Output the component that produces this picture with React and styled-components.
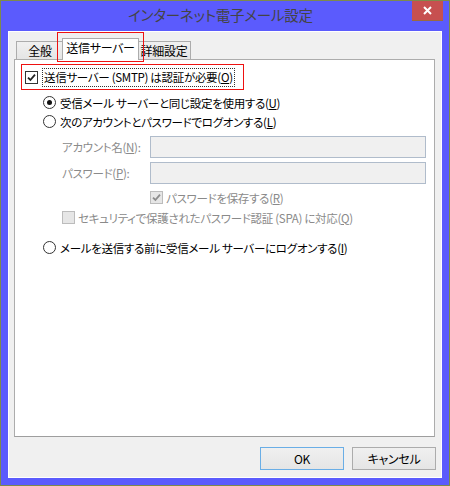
import React from "react";
import styled, { createGlobalStyle, css } from "styled-components";

const GlobalStyle = createGlobalStyle`
  html, body {
    margin: 0;
    padding: 0;
    background: #ffffff;
  }
  body {
    font-family: "Noto Sans CJK JP", "Noto Sans", sans-serif;
    font-size: 11.5px;
    letter-spacing: -0.3px;
    font-feature-settings: "palt";
    color: #000;
  }
`;

const Frame = styled.div`
  width: 450px;
  height: 486px;
  box-sizing: border-box;
  border: 1px solid #7d8a4c;
  background: #5b5bfd;
  display: flex;
  flex-direction: column;
  padding: 0 7px 7px 7px;
`;

const TitleBar = styled.div`
  position: relative;
  height: 30px;
  display: flex;
  align-items: center;
  justify-content: center;
  padding-right: 9px;
  padding-bottom: 4px;
  box-sizing: border-box;
  font-size: 14.5px;
  letter-spacing: -0.2px;
  color: #444;
`;

const CloseButton = styled.div`
  position: absolute;
  top: 0;
  right: -1px;
  width: 31px;
  height: 19px;
  background: #c75050;
  border-bottom: 1px solid #9a6a40;
  display: flex;
  align-items: center;
  justify-content: center;
`;

const Client = styled.div`
  flex: 1;
  background: #f0f0f0;
  border: 1px solid #ffffff;
  padding: 6px 6px 0 5px;
  display: flex;
  flex-direction: column;
`;

const TabStrip = styled.div`
  display: flex;
  align-items: flex-end;
  padding-left: 2px;
  height: 22px;
  margin-bottom: -1px;
  position: relative;
  z-index: 1;
`;

const Tab = styled.div`
  position: relative;
  box-sizing: border-box;
  width: ${(p) => p.$w}px;
  height: 18px;
  margin-bottom: 1px;
  border: 1px solid #acacac;
  border-bottom: none;
  background: linear-gradient(#f0f0f0, #e5e5e5);
  display: flex;
  align-items: center;
  justify-content: center;
  font-size: 12px;
  line-height: 1;
  white-space: nowrap;
  ${(p) =>
    p.$active &&
    css`
      height: 22px;
      margin: 0 -2px;
      margin-bottom: 0;
      background: #ffffff;
      z-index: 2;
      padding-bottom: 3px;
    `}
`;

const TabMark = styled.div`
  position: absolute;
  top: -7px;
  left: -6px;
  right: -6px;
  bottom: -2px;
  border: 1px solid #ee1111;
  pointer-events: none;
`;

const Panel = styled.div`
  height: 378px;
  box-sizing: border-box;
  background: #ffffff;
  border: 1px solid #acacac;
  border-bottom-color: #9e9e9e;
  display: flex;
  flex-direction: column;
  padding-top: 4px;
`;

const Line = styled.div`
  display: flex;
  align-items: center;
  height: ${(p) => p.$h || 19}px;
  margin-top: ${(p) => p.$mt || 0}px;
  margin-left: ${(p) => p.$ml || 0}px;
  color: ${(p) => (p.$disabled ? "#8a8a8a" : "#000")};
  white-space: nowrap;
`;

const Highlight = styled.div`
  display: flex;
  align-items: center;
  box-sizing: border-box;
  width: 223px;
  height: 26px;
  margin: 0 0 0 6px;
  padding-left: 3px;
  border: 1px solid #ee1111;
  white-space: nowrap;
`;

const FocusText = styled.span`
  flex: none;
  border: 1px dotted #333;
  padding: 1px 1px 2px 1px;
  margin-left: 1px;
  line-height: 14px;
`;

const Box = styled.span`
  width: 13px;
  height: 13px;
  box-sizing: border-box;
  flex: none;
  border: 1px solid ${(p) => (p.$disabled ? "#bcbcbc" : "#333")};
  background: ${(p) => (p.$disabled ? "#e6e6e6" : "#fff")};
  display: flex;
  align-items: center;
  justify-content: center;
  margin-right: 3px;
`;

const Circle = styled.span`
  width: 13px;
  height: 13px;
  box-sizing: border-box;
  flex: none;
  border-radius: 50%;
  border: 1px solid #333;
  background: #fff;
  display: flex;
  align-items: center;
  justify-content: center;
  margin-right: 4px;

  &::after {
    content: "";
    width: 5px;
    height: 5px;
    border-radius: 50%;
    background: ${(p) => (p.$on ? "#111" : "transparent")};
  }
`;

const FieldLabel = styled.span`
  width: 88px;
  flex: none;
  color: #8a8a8a;
`;

const Field = styled.div`
  width: 276px;
  height: 22px;
  box-sizing: border-box;
  border: 1px solid #b0bccb;
  background: #f0f0f0;
`;

const Footer = styled.div`
  display: flex;
  justify-content: flex-end;
  gap: 8px;
  margin-top: 10px;
  margin-right: -1px;
`;

const Button = styled.button`
  width: 84px;
  height: 23px;
  box-sizing: border-box;
  border: 1px solid ${(p) => (p.$primary ? "#6aaee6" : "#acacac")};
  background: linear-gradient(#f0f0f0, #e5e5e5);
  font-family: inherit;
  font-feature-settings: "palt";
  font-size: 12px;
  letter-spacing: -0.3px;
  color: #000;
  padding: 0;
  line-height: 1;
`;

const Check = ({ disabled }) => (
  <Box $disabled={disabled}>
    <svg width="9" height="9" viewBox="0 0 9 9">
      <path
        d="M1 4.6 L3.4 7 L8 1.6"
        fill="none"
        stroke={disabled ? "#8c8c8c" : "#222"}
        strokeWidth="1.8"
      />
    </svg>
  </Box>
);

const EmptyBox = () => <Box $disabled />;

export default function App() {
  return (
    <>
      <GlobalStyle />
      <Frame>
        <TitleBar>
          インターネット電子メール設定
          <CloseButton>
            <svg width="9" height="9" viewBox="0 0 9 9">
              <path d="M1 1 L8 8 M8 1 L1 8" stroke="#fff" strokeWidth="2" />
            </svg>
          </CloseButton>
        </TitleBar>
        <Client>
          <TabStrip>
            <Tab $w={48}>全般</Tab>
            <Tab $w={77} $active>
              送信サーバー
              <TabMark />
            </Tab>
            <Tab $w={54}>詳細設定</Tab>
          </TabStrip>
          <Panel>
            <Highlight>
              <Check />
              <FocusText>
                送信サーバー (SMTP) は認証が必要(<u>O</u>)
              </FocusText>
            </Highlight>
            <Line $mt={3} $ml={28}>
              <Circle $on />
              受信メール サーバーと同じ設定を使用する(<u>U</u>)
            </Line>
            <Line $ml={28}>
              <Circle />
              次のアカウントとパスワードでログオンする(<u>L</u>)
            </Line>
            <Line $h={22} $mt={5} $ml={47}>
              <FieldLabel>
                アカウント名(<u>N</u>):
              </FieldLabel>
              <Field />
            </Line>
            <Line $h={22} $mt={4} $ml={47}>
              <FieldLabel>
                パスワード(<u>P</u>):
              </FieldLabel>
              <Field />
            </Line>
            <Line $mt={4} $ml={135} $disabled>
              <Check disabled />
              パスワードを保存する(<u>R</u>)
            </Line>
            <Line $mt={1} $ml={47} $disabled>
              <EmptyBox />
              セキュリティで保護されたパスワード認証 (SPA) に対応(<u>Q</u>)
            </Line>
            <Line $mt={11} $ml={28}>
              <Circle />
              メールを送信する前に受信メール サーバーにログオンする(<u>I</u>)
            </Line>
          </Panel>
          <Footer>
            <Button $primary>OK</Button>
            <Button>キャンセル</Button>
          </Footer>
        </Client>
      </Frame>
    </>
  );
}
